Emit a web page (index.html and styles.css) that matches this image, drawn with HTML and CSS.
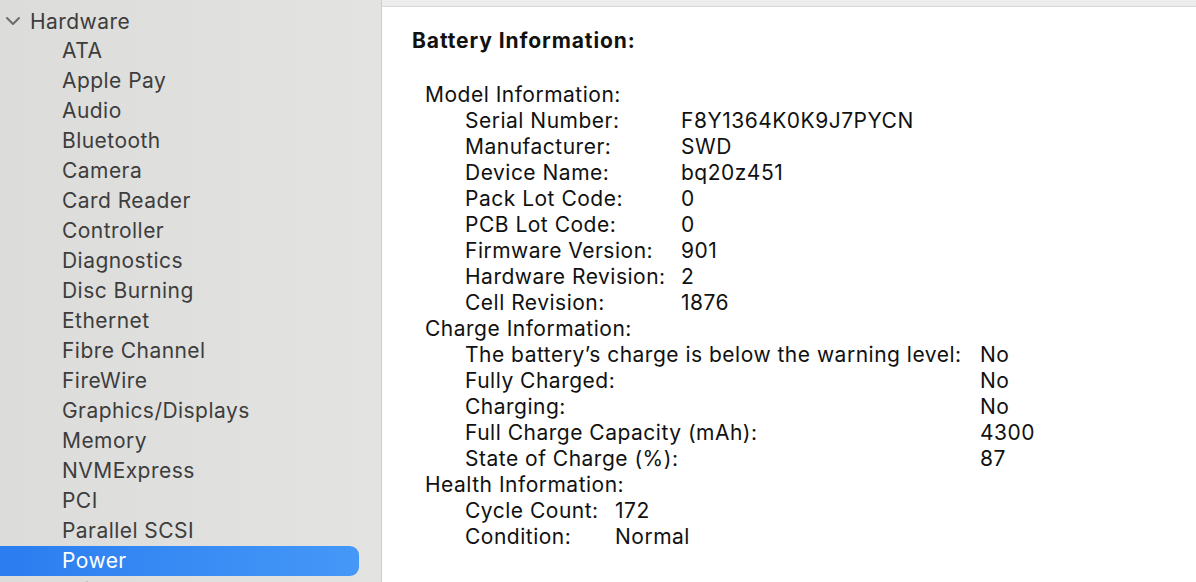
FILE: index.html
```html
<!DOCTYPE html>
<html lang="en">
<head>
<meta charset="utf-8">
<title>System Information – Power</title>
<link rel="stylesheet" href="styles.css">
</head>
<body>
<div class="window">
  <aside class="sidebar">
    <ul class="tree">
      <li class="group">
        <div class="group-row">
          <svg class="chevron" width="16" height="10" viewBox="0 0 16 10"><path d="M2 2 L8 8 L14 2" fill="none" stroke="#6b6b6b" stroke-width="2" stroke-linecap="round" stroke-linejoin="round"/></svg>
          <span>Hardware</span>
        </div>
        <ul class="children">
          <li>ATA</li>
          <li>Apple Pay</li>
          <li>Audio</li>
          <li>Bluetooth</li>
          <li>Camera</li>
          <li>Card Reader</li>
          <li>Controller</li>
          <li>Diagnostics</li>
          <li>Disc Burning</li>
          <li>Ethernet</li>
          <li>Fibre Channel</li>
          <li>FireWire</li>
          <li>Graphics/Displays</li>
          <li>Memory</li>
          <li>NVMExpress</li>
          <li>PCI</li>
          <li>Parallel SCSI</li>
          <li class="selected">Power</li>
          <li>Printers</li>
        </ul>
      </li>
    </ul>
  </aside>
  <main class="content">
    <div class="topband"></div>
    <div class="detail">
      <h2 class="section-title">Battery Information:</h2>
      <div class="group-title">Model Information:</div>
      <div class="kv kv-model">
        <span>Serial Number:</span><span>F8Y1364K0K9J7PYCN</span>
        <span>Manufacturer:</span><span>SWD</span>
        <span>Device Name:</span><span>bq20z451</span>
        <span>Pack Lot Code:</span><span>0</span>
        <span>PCB Lot Code:</span><span>0</span>
        <span>Firmware Version:</span><span>901</span>
        <span>Hardware Revision:</span><span>2</span>
        <span>Cell Revision:</span><span>1876</span>
      </div>
      <div class="group-title">Charge Information:</div>
      <div class="kv kv-charge">
        <span>The battery’s charge is below the warning level:</span><span>No</span>
        <span>Fully Charged:</span><span>No</span>
        <span>Charging:</span><span>No</span>
        <span>Full Charge Capacity (mAh):</span><span>4300</span>
        <span>State of Charge (%):</span><span>87</span>
      </div>
      <div class="group-title">Health Information:</div>
      <div class="kv kv-health">
        <span>Cycle Count:</span><span>172</span>
        <span>Condition:</span><span>Normal</span>
      </div>
      <h2 class="section-title next">System Power Settings:</h2>
    </div>
  </main>
</div>
</body>
</html>
```

FILE: styles.css
```css
* { box-sizing: border-box; }
html, body {
  margin: 0;
  padding: 0;
  width: 1196px;
  height: 582px;
  overflow: hidden;
  background: #ffffff;
  font-family: Inter, "Noto Sans", "Liberation Sans", sans-serif;
}
.window {
  display: flex;
  width: 1196px;
  height: 582px;
}
.sidebar {
  width: 382px;
  flex: none;
  height: 100%;
  background: linear-gradient(to right, #dcdcdb, #e3e3e1);
  border-right: 1px solid #cfcfcd;
  overflow: hidden;
  padding-top: 6px;
}
.tree, .children {
  list-style: none;
  margin: 0;
  padding: 0;
}
.group-row {
  display: flex;
  align-items: center;
  height: 30px;
  padding-left: 5px;
  gap: 9px;
  font-size: 21px;
  letter-spacing: 0.45px;
  color: #3d3d3d;
}
.chevron { flex: none; }
.children li {
  height: 30px;
  line-height: 30px;
  padding-left: 62px;
  font-size: 21px;
  letter-spacing: 0.45px;
  color: #3d3d3d;
  white-space: nowrap;
}
.children li.selected {
  color: #ffffff;
  background: linear-gradient(to right, #2b7df0, #4598f7);
  border-radius: 0 9px 9px 0;
  margin-right: 22px;
}
.content {
  flex: 1;
  height: 100%;
  overflow: hidden;
  background: #ffffff;
}
.topband {
  height: 7px;
  background: repeating-linear-gradient(to bottom, #f0f0f0 0, #f0f0f0 1px, #e9e9e9 1px, #e9e9e9 2px);
  border-bottom: 1px solid #d9d9d9;
}
.detail {
  padding: 21px 0 0 30px;
  color: #111111;
  font-size: 21px;
  letter-spacing: 0.5px;
}
.section-title {
  margin: 0;
  font-size: 21px;
  font-weight: 700;
  line-height: 26px;
  letter-spacing: 0.9px;
  color: #111111;
}
.section-title + .group-title { margin-top: 28px; }
.section-title.next { margin-top: 30px; }
.group-title {
  line-height: 26px;
  padding-left: 13px;
}
.kv {
  display: grid;
  line-height: 26px;
  padding-left: 53px;
  white-space: nowrap;
}
.kv-model { grid-template-columns: 216px auto; }
.kv-charge { grid-template-columns: 515px auto; }
.kv-health { grid-template-columns: 150px auto; }
```
